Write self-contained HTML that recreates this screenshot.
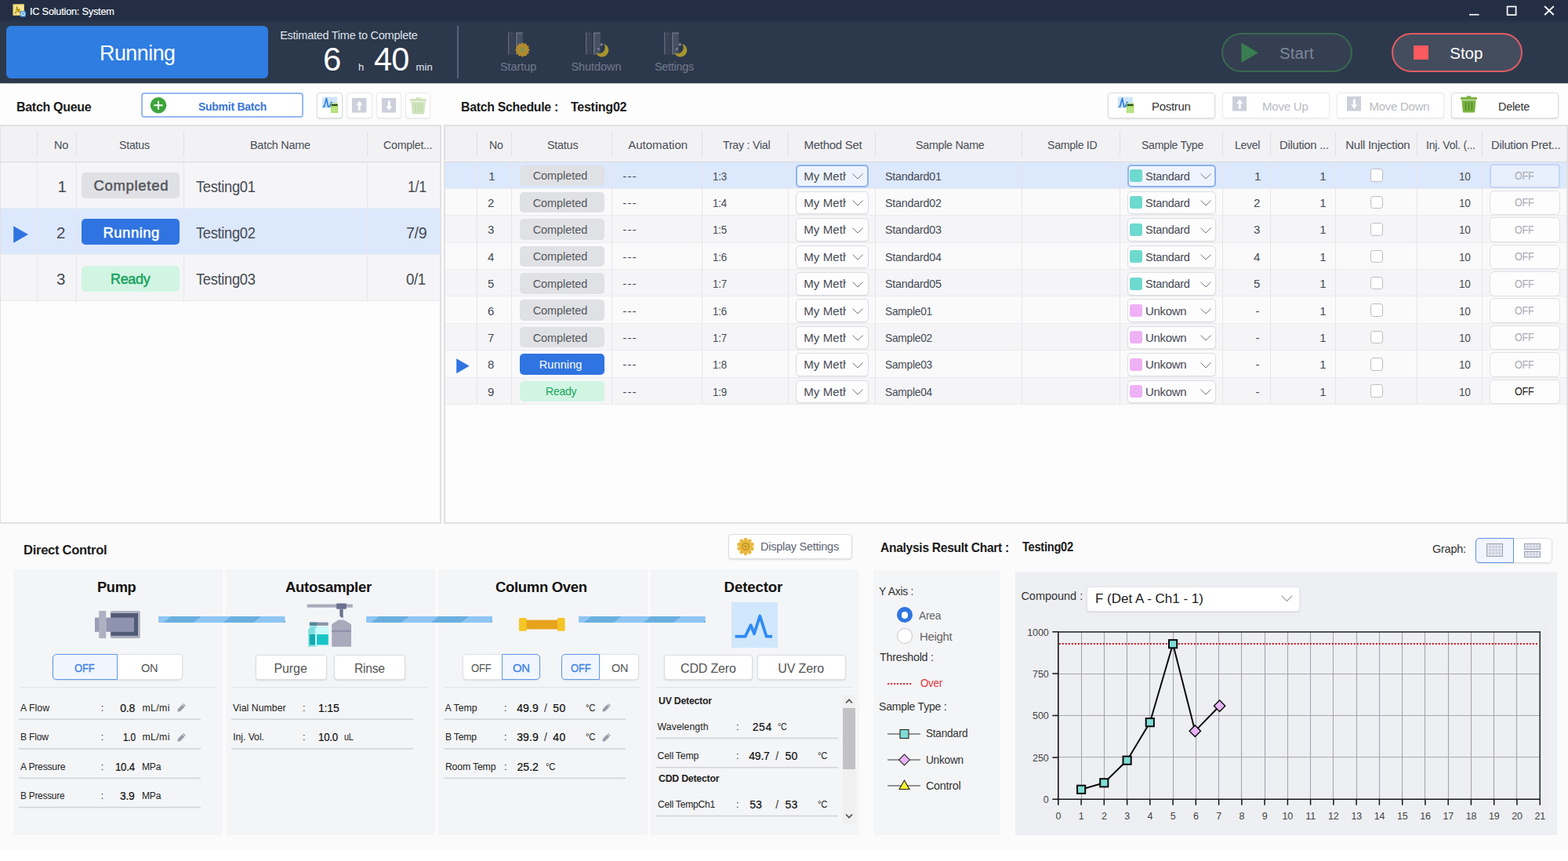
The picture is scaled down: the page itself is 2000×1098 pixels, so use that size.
<!DOCTYPE html>
<html lang="en">
<head>
<meta charset="utf-8">
<title>IC Solution: System</title>
<style>
html,body{margin:0;padding:0;}
body{width:2000px;height:1098px;overflow:hidden;background:#fff;font-family:"Liberation Sans",sans-serif;}
#app{position:relative;width:2000px;height:1098px;overflow:hidden;background:#fbfbfc;}
#app div,#app span.t,#app svg{position:absolute;box-sizing:border-box;}
span.t{white-space:nowrap;display:block;line-height:20px;}
.btn{background:#fff;border:1px solid #dcdde2;border-radius:4px;box-shadow:0 1px 2px rgba(0,0,0,.12);}

</style>
</head>
<body>
<div id="app">
<div style="left:0px;top:0px;width:2000px;height:106px;background:linear-gradient(to bottom,#232e45 0,#232e45 24px,#2c384b 30px,#2c384b 100%);"></div>
<svg style="left:16px;top:5px" width="18" height="18" viewBox="0 0 18 18">
<rect x="0.9" y="0.7" width="13.6" height="13.6" fill="#f4e497" stroke="#d9c25c" stroke-width="1"/>
<path d="M2.6 11.6 H4.2 L5.6 3.4 L7.2 10.4 L8.4 6.4 L9.6 11.6 H12.6" fill="none" stroke="#b3900f" stroke-width="1.4" stroke-linejoin="round"/>
<rect x="9.6" y="9" width="7.4" height="7.6" rx="1.6" fill="#4f9be6"/><circle cx="13.3" cy="12.8" r="2" fill="none" stroke="#e3f0fc" stroke-width="1.1"/>
</svg>
<span class="t" style="left:37.60px;top:5px;font-size:13.2px;color:#fff;letter-spacing:-0.238px;transform:scaleX(0.9674);transform-origin:0 0;-webkit-text-stroke:0.15px #fff;">IC Solution: System</span>
<svg style="left:1860px;top:0" width="140" height="27" viewBox="0 0 140 27">
<path d="M14 18.7 H26.6" stroke="#fff" stroke-width="1.6" fill="none"/>
<rect x="62.6" y="8.4" width="11" height="10.6" stroke="#fff" stroke-width="1.7" fill="none"/>
<path d="M110.2 8 L121.8 19 M121.8 8 L110.2 19" stroke="#fff" stroke-width="1.8" fill="none"/>
</svg>
<div style="left:8px;top:33px;width:334px;height:67px;background:#2f7de1;border-radius:6px;"></div>
<span class="t" style="left:126.80px;top:58px;font-size:28px;color:#fff;letter-spacing:-0.504px;transform:scaleX(0.9578);transform-origin:0 0;">Running</span>
<span class="t" style="left:357.20px;top:35px;font-size:14.5px;color:#dfe3ea;letter-spacing:-0.261px;">Estimated Time to Complete</span>
<span class="t" style="left:412.00px;top:66px;font-size:42px;color:#fff;">6</span>
<span class="t" style="left:457.00px;top:76px;font-size:13px;color:#e6e9ee;">h</span>
<span class="t" style="left:476.80px;top:66px;font-size:42px;color:#fff;letter-spacing:-0.756px;transform:scaleX(0.9876);transform-origin:0 0;">40</span>
<span class="t" style="left:530.50px;top:76px;font-size:13px;color:#e6e9ee;letter-spacing:0.175px;">min</span>
<div style="left:583px;top:33px;width:2px;height:67px;background:#55627a;"></div>
<svg style="left:646.2px;top:38px" width="36" height="38" viewBox="-2 -2.7 36 38"><rect x="0" y="0" width="8.5" height="29" fill="#394154"/><rect x="0" y="0" width="1.3" height="29" fill="#5d677b"/><circle cx="4.6" cy="2.6" r="0.7" fill="#6e778a"/><rect x="10.2" y="0.8" width="8.6" height="28" fill="#465064"/><path d="M10.8 29 V1.4 H18.8" fill="none" stroke="#6f798d" stroke-width="1.2"/><g transform="translate(18.5 22.8)" fill="#b48a2d"><rect x="-1.4" y="-8.9" width="2.8" height="4" transform="rotate(0)"/><rect x="-1.4" y="-8.9" width="2.8" height="4" transform="rotate(30)"/><rect x="-1.4" y="-8.9" width="2.8" height="4" transform="rotate(60)"/><rect x="-1.4" y="-8.9" width="2.8" height="4" transform="rotate(90)"/><rect x="-1.4" y="-8.9" width="2.8" height="4" transform="rotate(120)"/><rect x="-1.4" y="-8.9" width="2.8" height="4" transform="rotate(150)"/><rect x="-1.4" y="-8.9" width="2.8" height="4" transform="rotate(180)"/><rect x="-1.4" y="-8.9" width="2.8" height="4" transform="rotate(210)"/><rect x="-1.4" y="-8.9" width="2.8" height="4" transform="rotate(240)"/><rect x="-1.4" y="-8.9" width="2.8" height="4" transform="rotate(270)"/><rect x="-1.4" y="-8.9" width="2.8" height="4" transform="rotate(300)"/><rect x="-1.4" y="-8.9" width="2.8" height="4" transform="rotate(330)"/><circle r="7.7"/></g><circle cx="18.5" cy="22.8" r="3.6" fill="#8e9046"/></svg>
<svg style="left:745px;top:38px" width="36" height="38" viewBox="-2 -2.7 36 38"><rect x="0" y="0" width="8.5" height="29" fill="#394154"/><rect x="0" y="0" width="1.3" height="29" fill="#5d677b"/><circle cx="4.6" cy="2.6" r="0.7" fill="#6e778a"/><rect x="10.2" y="0.8" width="8.6" height="28" fill="#465064"/><path d="M10.8 29 V1.4 H18.8" fill="none" stroke="#6f798d" stroke-width="1.2"/><path d="M12.84 26.38 A8.5 8.5 0 1 0 23.12 15.22 A7.7 7.7 0 0 1 12.84 26.38 Z" fill="#a6952f"/><path d="M20.2 13 L20.9 15.3 L23.2 16 L20.9 16.7 L20.2 19 L19.5 16.7 L17.2 16 L19.5 15.3 Z" fill="#858d9e"/><path d="M16.3 19.4 L16.9 21.1 L18.6 21.7 L16.9 22.3 L16.3 24 L15.7 22.3 L14 21.7 L15.7 21.1 Z" fill="#858d9e"/></svg>
<svg style="left:845.1px;top:38px" width="36" height="38" viewBox="-2 -2.7 36 38"><rect x="0" y="0" width="8.5" height="29" fill="#394154"/><rect x="0" y="0" width="1.3" height="29" fill="#5d677b"/><circle cx="4.6" cy="2.6" r="0.7" fill="#6e778a"/><rect x="10.2" y="0.8" width="8.6" height="28" fill="#465064"/><path d="M10.8 29 V1.4 H18.8" fill="none" stroke="#6f798d" stroke-width="1.2"/><path d="M12.84 26.38 A8.5 8.5 0 1 0 23.12 15.22 A7.7 7.7 0 0 1 12.84 26.38 Z" fill="#a6952f"/><path d="M20.2 13 L20.9 15.3 L23.2 16 L20.9 16.7 L20.2 19 L19.5 16.7 L17.2 16 L19.5 15.3 Z" fill="#858d9e"/><path d="M16.3 19.4 L16.9 21.1 L18.6 21.7 L16.9 22.3 L16.3 24 L15.7 22.3 L14 21.7 L15.7 21.1 Z" fill="#858d9e"/></svg>
<span class="t" style="left:638.00px;top:75px;font-size:14.5px;color:#717b90;letter-spacing:-0.075px;">Startup</span>
<span class="t" style="left:728.40px;top:75px;font-size:14.5px;color:#717b90;letter-spacing:-0.057px;">Shutdown</span>
<span class="t" style="left:834.80px;top:75px;font-size:14.5px;color:#717b90;letter-spacing:-0.261px;transform:scaleX(0.9927);transform-origin:0 0;">Settings</span>
<div style="left:1558px;top:42px;width:167px;height:50px;border:2px solid #38694e;border-radius:25px;background:#343f51;"></div>
<svg style="left:1583px;top:54px" width="23" height="26" viewBox="0 0 23 26"><path d="M0.3 0.5 L22 13.2 L0.3 26 Z" fill="#3a7d50"/></svg>
<span class="t" style="left:1632.00px;top:58px;font-size:20.5px;color:#7d889c;letter-spacing:0.101px;">Start</span>
<div style="left:1775px;top:42px;width:167px;height:50px;border:2px solid #df5d62;border-radius:25px;background:#444d5e;"></div>
<div style="left:1803px;top:57.5px;width:19px;height:18.5px;background:#fb5a5f;"></div>
<span class="t" style="left:1849.30px;top:58px;font-size:20.5px;color:#fff;letter-spacing:-0.023px;">Stop</span>
<div style="left:0px;top:106px;width:2000px;height:54px;background:#fdfdfd;border-top:1px solid #c3c8d2;"></div>
<span class="t" style="left:21.00px;top:127px;font-size:16.8px;color:#1a1a1a;font-weight:700;letter-spacing:-0.302px;transform:scaleX(0.9523);transform-origin:0 0;">Batch Queue</span>
<div style="left:180px;top:118px;width:207px;height:32px;background:#fff;border:2px solid #96b8ee;border-radius:4px;"></div>
<svg style="left:191px;top:123px" width="22" height="22" viewBox="0 0 22 22"><circle cx="11" cy="11.2" r="10.3" fill="#3da43c"/><path d="M11 5.7 V16.7 M5.5 11.2 H16.5" stroke="#fff" stroke-width="2"/></svg>
<span class="t" style="left:252.50px;top:126px;font-size:14.5px;color:#3a76d8;font-weight:700;letter-spacing:-0.261px;transform:scaleX(0.9627);transform-origin:0 0;">Submit Batch</span>
<div class="btn" style="left:404.4px;top:118.3px;width:32.4px;height:32.4px;"></div>
<div style="left:442.2px;top:118.3px;width:32.4px;height:32.4px;background:#fff;border:1px solid #ebebef;border-radius:4px;box-shadow:0 1px 2px rgba(0,0,0,.07);"></div>
<div style="left:479.6px;top:118.3px;width:32.4px;height:32.4px;background:#fff;border:1px solid #ebebef;border-radius:4px;box-shadow:0 1px 2px rgba(0,0,0,.07);"></div>
<div style="left:517px;top:118.3px;width:32.4px;height:32.4px;background:#fff;border:1px solid #ebebef;border-radius:4px;box-shadow:0 1px 2px rgba(0,0,0,.07);"></div>
<svg style="left:410px;top:123px" width="22" height="22" viewBox="0 0 22 22">
<rect x="0.8" y="0.6" width="19.2" height="14.4" fill="#cfe5fb"/>
<path d="M1.6 13 H3.6 L6.4 2.4 L8.6 13 H10.4 L12.6 7.4 L14 9.8" fill="none" stroke="#2f7de1" stroke-width="1.7" stroke-linejoin="round"/>
<rect x="12" y="8.6" width="9.2" height="12.4" fill="#a3da5c"/><rect x="12" y="8.6" width="9.2" height="1.2" fill="#cfeaa6"/><rect x="12.6" y="9.8" width="8" height="2.2" fill="#2c4a1e"/>
<path d="M14.3 13 V21 M16.6 13 V21 M18.9 13 V21 M12 15.4 H21.2 M12 18.2 H21.2" stroke="#d5f0b0" stroke-width="0.7"/>
</svg>
<svg style="left:449.2px;top:125px" width="18.4" height="18.6" viewBox="0 0 18.4 18.6"><rect width="18.4" height="18.6" fill="#cdd0db"/><path d="M9.3 3.6 L13.2 9 H10.7 V15.8 H7.9 V9 H5.4 Z" fill="#fff"/></svg>
<svg style="left:486.6px;top:125px" width="18.4" height="18.6" viewBox="0 0 18.4 18.6"><rect width="18.4" height="18.6" fill="#cdd0db"/><path d="M9.3 16 L13.2 10.6 H10.7 V3.6 H7.9 V10.6 H5.4 Z" fill="#fff"/></svg>
<svg style="left:522.8px;top:123.6px;opacity:1" width="21" height="22" viewBox="0 0 21 22">
<path d="M7.6 0.3 H13.4 V2.2 H7.6 Z" fill="#cfe3bd"/><rect x="0" y="2" width="21" height="3.2" rx="1" fill="#cfe3bd"/>
<path d="M1.4 6 H19.6 L18.2 20.4 Q18.1 21.4 17.2 21.4 H3.8 Q2.9 21.4 2.8 20.4 Z" fill="#cfe3bd"/>
<path d="M6.6 8.6 V19 M10.5 8.6 V19 M14.4 8.6 V19" stroke="#c0d9ab" stroke-width="1.4"/>
</svg>
<span class="t" style="left:587.90px;top:127px;font-size:16.6px;color:#1a1a1a;font-weight:700;letter-spacing:-0.299px;transform:scaleX(0.9547);transform-origin:0 0;">Batch Schedule :</span>
<span class="t" style="left:727.60px;top:127px;font-size:16.6px;color:#1a1a1a;font-weight:700;letter-spacing:-0.299px;transform:scaleX(0.9679);transform-origin:0 0;">Testing02</span>
<div class="btn" style="left:1413px;top:118.3px;width:136.5px;height:32.4px;"></div>
<div style="left:1559px;top:118.3px;width:136.5px;height:32.4px;background:#fff;border:1px solid #ebebef;border-radius:4px;box-shadow:0 1px 2px rgba(0,0,0,.07);"></div>
<div style="left:1705px;top:118.3px;width:136.5px;height:32.4px;background:#fff;border:1px solid #ebebef;border-radius:4px;box-shadow:0 1px 2px rgba(0,0,0,.07);"></div>
<div class="btn" style="left:1851px;top:118.3px;width:136.5px;height:32.4px;"></div>
<span class="t" style="left:1468.70px;top:126px;font-size:15px;color:#333;letter-spacing:-0.270px;transform:scaleX(0.9945);transform-origin:0 0;">Postrun</span>
<span class="t" style="left:1610.10px;top:126px;font-size:15px;color:#b9bbc2;letter-spacing:-0.220px;">Move Up</span>
<span class="t" style="left:1746.50px;top:126px;font-size:15px;color:#b9bbc2;letter-spacing:-0.270px;">Move Down</span>
<span class="t" style="left:1910.70px;top:126px;font-size:15px;color:#333;letter-spacing:-0.270px;transform:scaleX(0.9594);transform-origin:0 0;">Delete</span>
<svg style="left:1425px;top:123px" width="22" height="22" viewBox="0 0 22 22">
<rect x="0.8" y="0.6" width="19.2" height="14.4" fill="#cfe5fb"/>
<path d="M1.6 13 H3.6 L6.4 2.4 L8.6 13 H10.4 L12.6 7.4 L14 9.8" fill="none" stroke="#2f7de1" stroke-width="1.7" stroke-linejoin="round"/>
<rect x="12" y="8.6" width="9.2" height="12.4" fill="#a3da5c"/><rect x="12" y="8.6" width="9.2" height="1.2" fill="#cfeaa6"/><rect x="12.6" y="9.8" width="8" height="2.2" fill="#2c4a1e"/>
<path d="M14.3 13 V21 M16.6 13 V21 M18.9 13 V21 M12 15.4 H21.2 M12 18.2 H21.2" stroke="#d5f0b0" stroke-width="0.7"/>
</svg>
<svg style="left:1571.7px;top:123.4px" width="18.4" height="18.6" viewBox="0 0 18.4 18.6"><rect width="18.4" height="18.6" fill="#cdd0db"/><path d="M9.3 3.6 L13.2 9 H10.7 V15.8 H7.9 V9 H5.4 Z" fill="#fff"/></svg>
<svg style="left:1717.8px;top:123.4px" width="18.4" height="18.6" viewBox="0 0 18.4 18.6"><rect width="18.4" height="18.6" fill="#cdd0db"/><path d="M9.3 16 L13.2 10.6 H10.7 V3.6 H7.9 V10.6 H5.4 Z" fill="#fff"/></svg>
<svg style="left:1863px;top:122px;opacity:1" width="21" height="22" viewBox="0 0 21 22">
<path d="M7.6 0.3 H13.4 V2.2 H7.6 Z" fill="#7cb342"/><rect x="0" y="2" width="21" height="3.2" rx="1" fill="#7cb342"/>
<path d="M1.4 6 H19.6 L18.2 20.4 Q18.1 21.4 17.2 21.4 H3.8 Q2.9 21.4 2.8 20.4 Z" fill="#7cb342"/>
<path d="M6.6 8.6 V19 M10.5 8.6 V19 M14.4 8.6 V19" stroke="#4c8a2a" stroke-width="1.4"/>
</svg>
<div style="left:-1px;top:159px;width:564px;height:509px;background:#fcfcfd;border:2px solid #e1e1e4;"></div>
<div style="left:1px;top:161px;width:560px;height:45.5px;background:#f2f2f4;border-bottom:1.5px solid #dadade;"></div>
<div style="left:1px;top:206.5px;width:560px;height:59.3px;background:#f5f5f7;border-bottom:1px solid #ececf0;"></div>
<div style="left:1px;top:265.8px;width:560px;height:59.3px;background:#dce8fc;border-bottom:1px solid #ececf0;"></div>
<div style="left:1px;top:325.1px;width:560px;height:59.3px;background:#f5f5f7;border-bottom:1px solid #ececf0;"></div>
<div style="left:47px;top:168px;width:1px;height:31px;background:#e0e0e4;"></div>
<div style="left:47px;top:207px;width:1px;height:177.89999999999998px;background:#e6e6ea;"></div>
<div style="left:97px;top:168px;width:1px;height:31px;background:#e0e0e4;"></div>
<div style="left:97px;top:207px;width:1px;height:177.89999999999998px;background:#e6e6ea;"></div>
<div style="left:234px;top:168px;width:1px;height:31px;background:#e0e0e4;"></div>
<div style="left:234px;top:207px;width:1px;height:177.89999999999998px;background:#e6e6ea;"></div>
<div style="left:468px;top:168px;width:1px;height:31px;background:#e0e0e4;"></div>
<div style="left:468px;top:207px;width:1px;height:177.89999999999998px;background:#e6e6ea;"></div>
<span class="t" style="left:69.40px;top:175px;font-size:15px;color:#4a4d57;letter-spacing:-0.270px;transform:scaleX(0.9626);transform-origin:0 0;">No</span>
<span class="t" style="left:152.40px;top:175px;font-size:15px;color:#4a4d57;letter-spacing:-0.270px;transform:scaleX(0.9472);transform-origin:0 0;">Status</span>
<span class="t" style="left:318.90px;top:175px;font-size:15px;color:#4a4d57;letter-spacing:-0.270px;transform:scaleX(0.9625);transform-origin:0 0;">Batch Name</span>
<span class="t" style="left:489.00px;top:175px;font-size:15px;color:#4a4d57;letter-spacing:-0.270px;transform:scaleX(0.9465);transform-origin:0 0;">Complet...</span>
<span class="t" style="left:73.40px;top:228px;font-size:20.5px;color:#464a54;">1</span>
<div style="left:104.4px;top:219.9px;width:124.8px;height:33px;background:#e0e1e5;border-radius:5px;"></div>
<span class="t" style="left:119.40px;top:227px;font-size:18.5px;color:#55575c;letter-spacing:0.704px;-webkit-text-stroke:0.5px currentColor;">Completed</span>
<span class="t" style="left:249.60px;top:228px;font-size:20px;color:#464a54;letter-spacing:-0.360px;transform:scaleX(0.9173);transform-origin:0 0;">Testing01</span>
<span class="t" style="left:519.60px;top:228px;font-size:20px;color:#464a54;letter-spacing:-0.360px;transform:scaleX(0.8863);transform-origin:0 0;">1/1</span>
<span class="t" style="left:72.10px;top:287px;font-size:20.5px;color:#464a54;">2</span>
<div style="left:104.4px;top:279.2px;width:124.8px;height:33px;background:#2f74e0;border-radius:5px;"></div>
<span class="t" style="left:131.50px;top:287px;font-size:18.5px;color:#fff;letter-spacing:0.481px;-webkit-text-stroke:0.5px currentColor;">Running</span>
<span class="t" style="left:249.60px;top:287px;font-size:20px;color:#464a54;letter-spacing:-0.360px;transform:scaleX(0.9173);transform-origin:0 0;">Testing02</span>
<span class="t" style="left:518.40px;top:287px;font-size:20px;color:#464a54;letter-spacing:-0.360px;transform:scaleX(0.9860);transform-origin:0 0;">7/9</span>
<span class="t" style="left:72.10px;top:346px;font-size:20.5px;color:#464a54;">3</span>
<div style="left:104.4px;top:338.5px;width:124.8px;height:33px;background:#d2f5e3;border-radius:5px;"></div>
<span class="t" style="left:141.00px;top:346px;font-size:18.5px;color:#17a35c;letter-spacing:-0.333px;transform:scaleX(0.9723);transform-origin:0 0;-webkit-text-stroke:0.5px currentColor;">Ready</span>
<span class="t" style="left:249.60px;top:346px;font-size:20px;color:#464a54;letter-spacing:-0.360px;transform:scaleX(0.9173);transform-origin:0 0;">Testing03</span>
<span class="t" style="left:518.40px;top:346px;font-size:20px;color:#464a54;letter-spacing:-0.360px;transform:scaleX(0.9306);transform-origin:0 0;">0/1</span>
<svg style="left:17px;top:287.5px" width="20" height="22" viewBox="0 0 20 22"><path d="M0.2 0.3 L19 11 L0.2 21.7 Z" fill="#2f74e0"/></svg>
<div style="left:566px;top:159px;width:1434px;height:509px;background:#fcfcfd;border:2px solid #e1e1e4;"></div>
<div style="left:568px;top:161px;width:1430px;height:45.5px;background:#f2f2f4;border-bottom:1.5px solid #dadade;"></div>
<div style="left:568px;top:206.5px;width:1430px;height:34.375px;background:#dce8fc;border-bottom:1px solid #ececf0;"></div>
<div style="left:568px;top:240.875px;width:1430px;height:34.375px;background:#fafafb;border-bottom:1px solid #ececf0;"></div>
<div style="left:568px;top:275.25px;width:1430px;height:34.375px;background:#f5f5f7;border-bottom:1px solid #ececf0;"></div>
<div style="left:568px;top:309.625px;width:1430px;height:34.375px;background:#fafafb;border-bottom:1px solid #ececf0;"></div>
<div style="left:568px;top:344.0px;width:1430px;height:34.375px;background:#f5f5f7;border-bottom:1px solid #ececf0;"></div>
<div style="left:568px;top:378.375px;width:1430px;height:34.375px;background:#fafafb;border-bottom:1px solid #ececf0;"></div>
<div style="left:568px;top:412.75px;width:1430px;height:34.375px;background:#f5f5f7;border-bottom:1px solid #ececf0;"></div>
<div style="left:568px;top:447.125px;width:1430px;height:34.375px;background:#fafafb;border-bottom:1px solid #ececf0;"></div>
<div style="left:568px;top:481.5px;width:1430px;height:34.375px;background:#f5f5f7;border-bottom:1px solid #ececf0;"></div>
<div style="left:608px;top:168px;width:1px;height:31px;background:#e0e0e4;"></div>
<div style="left:608px;top:207px;width:1px;height:309.375px;background:#e6e6ea;"></div>
<div style="left:652px;top:168px;width:1px;height:31px;background:#e0e0e4;"></div>
<div style="left:652px;top:207px;width:1px;height:309.375px;background:#e6e6ea;"></div>
<div style="left:780px;top:168px;width:1px;height:31px;background:#e0e0e4;"></div>
<div style="left:780px;top:207px;width:1px;height:309.375px;background:#e6e6ea;"></div>
<div style="left:895px;top:168px;width:1px;height:31px;background:#e0e0e4;"></div>
<div style="left:895px;top:207px;width:1px;height:309.375px;background:#e6e6ea;"></div>
<div style="left:1005px;top:168px;width:1px;height:31px;background:#e0e0e4;"></div>
<div style="left:1005px;top:207px;width:1px;height:309.375px;background:#e6e6ea;"></div>
<div style="left:1116px;top:168px;width:1px;height:31px;background:#e0e0e4;"></div>
<div style="left:1116px;top:207px;width:1px;height:309.375px;background:#e6e6ea;"></div>
<div style="left:1303px;top:168px;width:1px;height:31px;background:#e0e0e4;"></div>
<div style="left:1303px;top:207px;width:1px;height:309.375px;background:#e6e6ea;"></div>
<div style="left:1428px;top:168px;width:1px;height:31px;background:#e0e0e4;"></div>
<div style="left:1428px;top:207px;width:1px;height:309.375px;background:#e6e6ea;"></div>
<div style="left:1559px;top:168px;width:1px;height:31px;background:#e0e0e4;"></div>
<div style="left:1559px;top:207px;width:1px;height:309.375px;background:#e6e6ea;"></div>
<div style="left:1620px;top:168px;width:1px;height:31px;background:#e0e0e4;"></div>
<div style="left:1620px;top:207px;width:1px;height:309.375px;background:#e6e6ea;"></div>
<div style="left:1703px;top:168px;width:1px;height:31px;background:#e0e0e4;"></div>
<div style="left:1703px;top:207px;width:1px;height:309.375px;background:#e6e6ea;"></div>
<div style="left:1807px;top:168px;width:1px;height:31px;background:#e0e0e4;"></div>
<div style="left:1807px;top:207px;width:1px;height:309.375px;background:#e6e6ea;"></div>
<div style="left:1890px;top:168px;width:1px;height:31px;background:#e0e0e4;"></div>
<div style="left:1890px;top:207px;width:1px;height:309.375px;background:#e6e6ea;"></div>
<span class="t" style="left:623.60px;top:175px;font-size:15px;color:#4a4d57;letter-spacing:-0.270px;transform:scaleX(0.9414);transform-origin:0 0;">No</span>
<span class="t" style="left:698.00px;top:175px;font-size:15px;color:#4a4d57;letter-spacing:-0.270px;transform:scaleX(0.9617);transform-origin:0 0;">Status</span>
<span class="t" style="left:801.20px;top:175px;font-size:15px;color:#4a4d57;">Automation</span>
<span class="t" style="left:921.90px;top:175px;font-size:15px;color:#4a4d57;letter-spacing:-0.270px;transform:scaleX(0.9470);transform-origin:0 0;">Tray : Vial</span>
<span class="t" style="left:1025.50px;top:175px;font-size:15px;color:#4a4d57;letter-spacing:-0.270px;">Method Set</span>
<span class="t" style="left:1167.90px;top:175px;font-size:15px;color:#4a4d57;letter-spacing:-0.270px;transform:scaleX(0.9498);transform-origin:0 0;">Sample Name</span>
<span class="t" style="left:1335.80px;top:175px;font-size:15px;color:#4a4d57;letter-spacing:-0.270px;transform:scaleX(0.9386);transform-origin:0 0;">Sample ID</span>
<span class="t" style="left:1456.40px;top:175px;font-size:15px;color:#4a4d57;letter-spacing:-0.270px;transform:scaleX(0.9364);transform-origin:0 0;">Sample Type</span>
<span class="t" style="left:1575.20px;top:175px;font-size:15px;color:#4a4d57;letter-spacing:-0.270px;transform:scaleX(0.9316);transform-origin:0 0;">Level</span>
<span class="t" style="left:1631.70px;top:175px;font-size:15px;color:#4a4d57;letter-spacing:-0.270px;transform:scaleX(0.9886);transform-origin:0 0;">Dilution ...</span>
<span class="t" style="left:1716.30px;top:175px;font-size:15px;color:#4a4d57;letter-spacing:-0.270px;">Null Injection</span>
<span class="t" style="left:1818.90px;top:175px;font-size:15px;color:#4a4d57;letter-spacing:-0.270px;transform:scaleX(0.9354);transform-origin:0 0;">Inj. Vol. (...</span>
<span class="t" style="left:1901.70px;top:175px;font-size:15px;color:#4a4d57;letter-spacing:-0.270px;transform:scaleX(0.9827);transform-origin:0 0;">Dilution Pret...</span>
<span class="t" style="left:623.25px;top:215px;font-size:15px;color:#464a54;">1</span>
<div style="left:663px;top:210.5px;width:107.6px;height:26.5px;background:#e0e1e5;border-radius:5px;"></div>
<span class="t" style="left:679.70px;top:214px;font-size:14.5px;color:#55575c;letter-spacing:-0.065px;">Completed</span>
<span class="t" style="left:794.20px;top:215px;font-size:15px;color:#464a54;letter-spacing:1.207px;">---</span>
<span class="t" style="left:908.90px;top:215px;font-size:15px;color:#464a54;letter-spacing:-0.270px;transform:scaleX(0.8912);transform-origin:0 0;">1:3</span>
<div style="left:1015.2px;top:209.5px;width:92.6px;height:29.6px;background:#eef4fe;border:2px solid #8fb2ea;border-radius:5px;"></div>
<div style="left:1024px;top:215px;width:54.6px;height:21px;overflow:hidden;"><span class="t" style="left:1.2px;top:0;font-size:15px;color:#464a54;letter-spacing:0.12px;">My Method</span></div>
<svg style="left:1087.4px;top:221.1px" width="14" height="8" viewBox="0 0 14 8"><path d="M0.5 0.6 L7 7 L13.5 0.6" fill="none" stroke="#707480" stroke-width="1"/></svg>
<span class="t" style="left:1129.30px;top:215px;font-size:15px;color:#464a54;letter-spacing:-0.270px;transform:scaleX(0.9569);transform-origin:0 0;">Standard01</span>
<div style="left:1437.7px;top:209.5px;width:113.5px;height:29.6px;background:#eef4fe;border:2px solid #8fb2ea;border-radius:5px;"></div>
<div style="left:1440.7px;top:216.0px;width:16.2px;height:16px;background:#6dd9cf;border-radius:3px;"></div>
<span class="t" style="left:1460.70px;top:215px;font-size:15px;color:#464a54;letter-spacing:-0.270px;transform:scaleX(0.9646);transform-origin:0 0;">Standard</span>
<svg style="left:1530.9px;top:221.1px" width="14" height="8" viewBox="0 0 14 8"><path d="M0.5 0.6 L7 7 L13.5 0.6" fill="none" stroke="#707480" stroke-width="1"/></svg>
<span class="t" style="left:1600.05px;top:215px;font-size:15px;color:#464a54;">1</span>
<span class="t" style="left:1683.25px;top:215px;font-size:15px;color:#464a54;">1</span>
<div style="left:1747.8px;top:215.39999999999998px;width:16.4px;height:16.6px;background:#fff;border:1px solid #bcbcc1;border-radius:3.5px;"></div>
<span class="t" style="left:1861.40px;top:215px;font-size:15px;color:#464a54;letter-spacing:-0.270px;transform:scaleX(0.9015);transform-origin:0 0;">10</span>
<div style="left:1899.5px;top:208.5px;width:90.2px;height:31.6px;background:#e8effd;border:2px solid #c5d5f3;border-radius:4px;"></div>
<span class="t" style="left:1931.70px;top:214px;font-size:14px;color:#a9abb3;letter-spacing:-0.252px;transform:scaleX(0.8949);transform-origin:0 0;">OFF</span>
<span class="t" style="left:622.10px;top:249px;font-size:15px;color:#464a54;">2</span>
<div style="left:663px;top:244.875px;width:107.6px;height:26.5px;background:#e0e1e5;border-radius:5px;"></div>
<span class="t" style="left:679.70px;top:249px;font-size:14.5px;color:#55575c;letter-spacing:-0.065px;">Completed</span>
<span class="t" style="left:794.20px;top:249px;font-size:15px;color:#464a54;letter-spacing:1.207px;">---</span>
<span class="t" style="left:908.90px;top:249px;font-size:15px;color:#464a54;letter-spacing:-0.270px;transform:scaleX(0.8912);transform-origin:0 0;">1:4</span>
<div style="left:1015.2px;top:243.875px;width:92.6px;height:29.6px;background:#fdfdfe;border:1px solid #dcdde2;border-radius:5px;box-shadow:0 1px 1px rgba(0,0,0,.06);"></div>
<div style="left:1024px;top:249px;width:54.6px;height:21px;overflow:hidden;"><span class="t" style="left:1.2px;top:0;font-size:15px;color:#464a54;letter-spacing:0.12px;">My Method</span></div>
<svg style="left:1087.4px;top:255.475px" width="14" height="8" viewBox="0 0 14 8"><path d="M0.5 0.6 L7 7 L13.5 0.6" fill="none" stroke="#707480" stroke-width="1"/></svg>
<span class="t" style="left:1129.30px;top:249px;font-size:15px;color:#464a54;letter-spacing:-0.270px;transform:scaleX(0.9569);transform-origin:0 0;">Standard02</span>
<div style="left:1437.7px;top:243.875px;width:113.5px;height:29.6px;background:#fdfdfe;border:1px solid #dcdde2;border-radius:5px;box-shadow:0 1px 1px rgba(0,0,0,.06);"></div>
<div style="left:1440.7px;top:250.375px;width:16.2px;height:16px;background:#6dd9cf;border-radius:3px;"></div>
<span class="t" style="left:1460.70px;top:249px;font-size:15px;color:#464a54;letter-spacing:-0.270px;transform:scaleX(0.9646);transform-origin:0 0;">Standard</span>
<svg style="left:1530.9px;top:255.475px" width="14" height="8" viewBox="0 0 14 8"><path d="M0.5 0.6 L7 7 L13.5 0.6" fill="none" stroke="#707480" stroke-width="1"/></svg>
<span class="t" style="left:1598.90px;top:249px;font-size:15px;color:#464a54;">2</span>
<span class="t" style="left:1683.25px;top:249px;font-size:15px;color:#464a54;">1</span>
<div style="left:1747.8px;top:249.77499999999998px;width:16.4px;height:16.6px;background:#fff;border:1px solid #bcbcc1;border-radius:3.5px;"></div>
<span class="t" style="left:1861.40px;top:249px;font-size:15px;color:#464a54;letter-spacing:-0.270px;transform:scaleX(0.9015);transform-origin:0 0;">10</span>
<div style="left:1899.5px;top:242.875px;width:90.2px;height:31.6px;background:#fdfdfe;border:1px solid #e0e0e4;border-radius:6px;"></div>
<span class="t" style="left:1931.70px;top:248px;font-size:14px;color:#a9abb3;letter-spacing:-0.252px;transform:scaleX(0.8949);transform-origin:0 0;">OFF</span>
<span class="t" style="left:622.10px;top:283px;font-size:15px;color:#464a54;">3</span>
<div style="left:663px;top:279.25px;width:107.6px;height:26.5px;background:#e0e1e5;border-radius:5px;"></div>
<span class="t" style="left:679.70px;top:283px;font-size:14.5px;color:#55575c;letter-spacing:-0.065px;">Completed</span>
<span class="t" style="left:794.20px;top:283px;font-size:15px;color:#464a54;letter-spacing:1.207px;">---</span>
<span class="t" style="left:908.90px;top:283px;font-size:15px;color:#464a54;letter-spacing:-0.270px;transform:scaleX(0.8912);transform-origin:0 0;">1:5</span>
<div style="left:1015.2px;top:278.25px;width:92.6px;height:29.6px;background:#fdfdfe;border:1px solid #dcdde2;border-radius:5px;box-shadow:0 1px 1px rgba(0,0,0,.06);"></div>
<div style="left:1024px;top:283px;width:54.6px;height:21px;overflow:hidden;"><span class="t" style="left:1.2px;top:0;font-size:15px;color:#464a54;letter-spacing:0.12px;">My Method</span></div>
<svg style="left:1087.4px;top:289.84999999999997px" width="14" height="8" viewBox="0 0 14 8"><path d="M0.5 0.6 L7 7 L13.5 0.6" fill="none" stroke="#707480" stroke-width="1"/></svg>
<span class="t" style="left:1129.30px;top:283px;font-size:15px;color:#464a54;letter-spacing:-0.270px;transform:scaleX(0.9569);transform-origin:0 0;">Standard03</span>
<div style="left:1437.7px;top:278.25px;width:113.5px;height:29.6px;background:#fdfdfe;border:1px solid #dcdde2;border-radius:5px;box-shadow:0 1px 1px rgba(0,0,0,.06);"></div>
<div style="left:1440.7px;top:284.75px;width:16.2px;height:16px;background:#6dd9cf;border-radius:3px;"></div>
<span class="t" style="left:1460.70px;top:283px;font-size:15px;color:#464a54;letter-spacing:-0.270px;transform:scaleX(0.9646);transform-origin:0 0;">Standard</span>
<svg style="left:1530.9px;top:289.84999999999997px" width="14" height="8" viewBox="0 0 14 8"><path d="M0.5 0.6 L7 7 L13.5 0.6" fill="none" stroke="#707480" stroke-width="1"/></svg>
<span class="t" style="left:1598.90px;top:283px;font-size:15px;color:#464a54;">3</span>
<span class="t" style="left:1683.25px;top:283px;font-size:15px;color:#464a54;">1</span>
<div style="left:1747.8px;top:284.15px;width:16.4px;height:16.6px;background:#fff;border:1px solid #bcbcc1;border-radius:3.5px;"></div>
<span class="t" style="left:1861.40px;top:283px;font-size:15px;color:#464a54;letter-spacing:-0.270px;transform:scaleX(0.9015);transform-origin:0 0;">10</span>
<div style="left:1899.5px;top:277.25px;width:90.2px;height:31.6px;background:#fdfdfe;border:1px solid #e0e0e4;border-radius:6px;"></div>
<span class="t" style="left:1931.70px;top:283px;font-size:14px;color:#a9abb3;letter-spacing:-0.252px;transform:scaleX(0.8949);transform-origin:0 0;">OFF</span>
<span class="t" style="left:622.10px;top:318px;font-size:15px;color:#464a54;">4</span>
<div style="left:663px;top:313.625px;width:107.6px;height:26.5px;background:#e0e1e5;border-radius:5px;"></div>
<span class="t" style="left:679.70px;top:317px;font-size:14.5px;color:#55575c;letter-spacing:-0.065px;">Completed</span>
<span class="t" style="left:794.20px;top:318px;font-size:15px;color:#464a54;letter-spacing:1.207px;">---</span>
<span class="t" style="left:908.90px;top:318px;font-size:15px;color:#464a54;letter-spacing:-0.270px;transform:scaleX(0.8912);transform-origin:0 0;">1:6</span>
<div style="left:1015.2px;top:312.625px;width:92.6px;height:29.6px;background:#fdfdfe;border:1px solid #dcdde2;border-radius:5px;box-shadow:0 1px 1px rgba(0,0,0,.06);"></div>
<div style="left:1024px;top:318px;width:54.6px;height:21px;overflow:hidden;"><span class="t" style="left:1.2px;top:0;font-size:15px;color:#464a54;letter-spacing:0.12px;">My Method</span></div>
<svg style="left:1087.4px;top:324.22499999999997px" width="14" height="8" viewBox="0 0 14 8"><path d="M0.5 0.6 L7 7 L13.5 0.6" fill="none" stroke="#707480" stroke-width="1"/></svg>
<span class="t" style="left:1129.30px;top:318px;font-size:15px;color:#464a54;letter-spacing:-0.270px;transform:scaleX(0.9569);transform-origin:0 0;">Standard04</span>
<div style="left:1437.7px;top:312.625px;width:113.5px;height:29.6px;background:#fdfdfe;border:1px solid #dcdde2;border-radius:5px;box-shadow:0 1px 1px rgba(0,0,0,.06);"></div>
<div style="left:1440.7px;top:319.125px;width:16.2px;height:16px;background:#6dd9cf;border-radius:3px;"></div>
<span class="t" style="left:1460.70px;top:318px;font-size:15px;color:#464a54;letter-spacing:-0.270px;transform:scaleX(0.9646);transform-origin:0 0;">Standard</span>
<svg style="left:1530.9px;top:324.22499999999997px" width="14" height="8" viewBox="0 0 14 8"><path d="M0.5 0.6 L7 7 L13.5 0.6" fill="none" stroke="#707480" stroke-width="1"/></svg>
<span class="t" style="left:1598.90px;top:318px;font-size:15px;color:#464a54;">4</span>
<span class="t" style="left:1683.25px;top:318px;font-size:15px;color:#464a54;">1</span>
<div style="left:1747.8px;top:318.525px;width:16.4px;height:16.6px;background:#fff;border:1px solid #bcbcc1;border-radius:3.5px;"></div>
<span class="t" style="left:1861.40px;top:318px;font-size:15px;color:#464a54;letter-spacing:-0.270px;transform:scaleX(0.9015);transform-origin:0 0;">10</span>
<div style="left:1899.5px;top:311.625px;width:90.2px;height:31.6px;background:#fdfdfe;border:1px solid #e0e0e4;border-radius:6px;"></div>
<span class="t" style="left:1931.70px;top:317px;font-size:14px;color:#a9abb3;letter-spacing:-0.252px;transform:scaleX(0.8949);transform-origin:0 0;">OFF</span>
<span class="t" style="left:622.10px;top:352px;font-size:15px;color:#464a54;">5</span>
<div style="left:663px;top:348.0px;width:107.6px;height:26.5px;background:#e0e1e5;border-radius:5px;"></div>
<span class="t" style="left:679.70px;top:352px;font-size:14.5px;color:#55575c;letter-spacing:-0.065px;">Completed</span>
<span class="t" style="left:794.20px;top:352px;font-size:15px;color:#464a54;letter-spacing:1.207px;">---</span>
<span class="t" style="left:908.90px;top:352px;font-size:15px;color:#464a54;letter-spacing:-0.270px;transform:scaleX(0.8912);transform-origin:0 0;">1:7</span>
<div style="left:1015.2px;top:347.0px;width:92.6px;height:29.6px;background:#fdfdfe;border:1px solid #dcdde2;border-radius:5px;box-shadow:0 1px 1px rgba(0,0,0,.06);"></div>
<div style="left:1024px;top:352px;width:54.6px;height:21px;overflow:hidden;"><span class="t" style="left:1.2px;top:0;font-size:15px;color:#464a54;letter-spacing:0.12px;">My Method</span></div>
<svg style="left:1087.4px;top:358.59999999999997px" width="14" height="8" viewBox="0 0 14 8"><path d="M0.5 0.6 L7 7 L13.5 0.6" fill="none" stroke="#707480" stroke-width="1"/></svg>
<span class="t" style="left:1129.30px;top:352px;font-size:15px;color:#464a54;letter-spacing:-0.270px;transform:scaleX(0.9569);transform-origin:0 0;">Standard05</span>
<div style="left:1437.7px;top:347.0px;width:113.5px;height:29.6px;background:#fdfdfe;border:1px solid #dcdde2;border-radius:5px;box-shadow:0 1px 1px rgba(0,0,0,.06);"></div>
<div style="left:1440.7px;top:353.5px;width:16.2px;height:16px;background:#6dd9cf;border-radius:3px;"></div>
<span class="t" style="left:1460.70px;top:352px;font-size:15px;color:#464a54;letter-spacing:-0.270px;transform:scaleX(0.9646);transform-origin:0 0;">Standard</span>
<svg style="left:1530.9px;top:358.59999999999997px" width="14" height="8" viewBox="0 0 14 8"><path d="M0.5 0.6 L7 7 L13.5 0.6" fill="none" stroke="#707480" stroke-width="1"/></svg>
<span class="t" style="left:1598.90px;top:352px;font-size:15px;color:#464a54;">5</span>
<span class="t" style="left:1683.25px;top:352px;font-size:15px;color:#464a54;">1</span>
<div style="left:1747.8px;top:352.9px;width:16.4px;height:16.6px;background:#fff;border:1px solid #bcbcc1;border-radius:3.5px;"></div>
<span class="t" style="left:1861.40px;top:352px;font-size:15px;color:#464a54;letter-spacing:-0.270px;transform:scaleX(0.9015);transform-origin:0 0;">10</span>
<div style="left:1899.5px;top:346.0px;width:90.2px;height:31.6px;background:#fdfdfe;border:1px solid #e0e0e4;border-radius:6px;"></div>
<span class="t" style="left:1931.70px;top:352px;font-size:14px;color:#a9abb3;letter-spacing:-0.252px;transform:scaleX(0.8949);transform-origin:0 0;">OFF</span>
<span class="t" style="left:622.10px;top:387px;font-size:15px;color:#464a54;">6</span>
<div style="left:663px;top:382.375px;width:107.6px;height:26.5px;background:#e0e1e5;border-radius:5px;"></div>
<span class="t" style="left:679.70px;top:386px;font-size:14.5px;color:#55575c;letter-spacing:-0.065px;">Completed</span>
<span class="t" style="left:794.20px;top:387px;font-size:15px;color:#464a54;letter-spacing:1.207px;">---</span>
<span class="t" style="left:908.90px;top:387px;font-size:15px;color:#464a54;letter-spacing:-0.270px;transform:scaleX(0.8912);transform-origin:0 0;">1:6</span>
<div style="left:1015.2px;top:381.375px;width:92.6px;height:29.6px;background:#fdfdfe;border:1px solid #dcdde2;border-radius:5px;box-shadow:0 1px 1px rgba(0,0,0,.06);"></div>
<div style="left:1024px;top:387px;width:54.6px;height:21px;overflow:hidden;"><span class="t" style="left:1.2px;top:0;font-size:15px;color:#464a54;letter-spacing:0.12px;">My Method</span></div>
<svg style="left:1087.4px;top:392.97499999999997px" width="14" height="8" viewBox="0 0 14 8"><path d="M0.5 0.6 L7 7 L13.5 0.6" fill="none" stroke="#707480" stroke-width="1"/></svg>
<span class="t" style="left:1129.30px;top:387px;font-size:15px;color:#464a54;letter-spacing:-0.270px;transform:scaleX(0.9169);transform-origin:0 0;">Sample01</span>
<div style="left:1437.7px;top:381.375px;width:113.5px;height:29.6px;background:#fdfdfe;border:1px solid #dcdde2;border-radius:5px;box-shadow:0 1px 1px rgba(0,0,0,.06);"></div>
<div style="left:1440.7px;top:387.875px;width:16.2px;height:16px;background:#efb1f5;border-radius:3px;"></div>
<span class="t" style="left:1460.70px;top:387px;font-size:15px;color:#464a54;letter-spacing:-0.270px;transform:scaleX(0.9954);transform-origin:0 0;">Unkown</span>
<svg style="left:1530.9px;top:392.97499999999997px" width="14" height="8" viewBox="0 0 14 8"><path d="M0.5 0.6 L7 7 L13.5 0.6" fill="none" stroke="#707480" stroke-width="1"/></svg>
<span class="t" style="left:1601.50px;top:387px;font-size:15px;color:#464a54;">-</span>
<span class="t" style="left:1683.25px;top:387px;font-size:15px;color:#464a54;">1</span>
<div style="left:1747.8px;top:387.275px;width:16.4px;height:16.6px;background:#fff;border:1px solid #bcbcc1;border-radius:3.5px;"></div>
<span class="t" style="left:1861.40px;top:387px;font-size:15px;color:#464a54;letter-spacing:-0.270px;transform:scaleX(0.9015);transform-origin:0 0;">10</span>
<div style="left:1899.5px;top:380.375px;width:90.2px;height:31.6px;background:#fdfdfe;border:1px solid #e0e0e4;border-radius:6px;"></div>
<span class="t" style="left:1931.70px;top:386px;font-size:14px;color:#a9abb3;letter-spacing:-0.252px;transform:scaleX(0.8949);transform-origin:0 0;">OFF</span>
<span class="t" style="left:622.10px;top:421px;font-size:15px;color:#464a54;">7</span>
<div style="left:663px;top:416.75px;width:107.6px;height:26.5px;background:#e0e1e5;border-radius:5px;"></div>
<span class="t" style="left:679.70px;top:421px;font-size:14.5px;color:#55575c;letter-spacing:-0.065px;">Completed</span>
<span class="t" style="left:794.20px;top:421px;font-size:15px;color:#464a54;letter-spacing:1.207px;">---</span>
<span class="t" style="left:908.90px;top:421px;font-size:15px;color:#464a54;letter-spacing:-0.270px;transform:scaleX(0.8912);transform-origin:0 0;">1:7</span>
<div style="left:1015.2px;top:415.75px;width:92.6px;height:29.6px;background:#fdfdfe;border:1px solid #dcdde2;border-radius:5px;box-shadow:0 1px 1px rgba(0,0,0,.06);"></div>
<div style="left:1024px;top:421px;width:54.6px;height:21px;overflow:hidden;"><span class="t" style="left:1.2px;top:0;font-size:15px;color:#464a54;letter-spacing:0.12px;">My Method</span></div>
<svg style="left:1087.4px;top:427.34999999999997px" width="14" height="8" viewBox="0 0 14 8"><path d="M0.5 0.6 L7 7 L13.5 0.6" fill="none" stroke="#707480" stroke-width="1"/></svg>
<span class="t" style="left:1129.30px;top:421px;font-size:15px;color:#464a54;letter-spacing:-0.270px;transform:scaleX(0.9169);transform-origin:0 0;">Sample02</span>
<div style="left:1437.7px;top:415.75px;width:113.5px;height:29.6px;background:#fdfdfe;border:1px solid #dcdde2;border-radius:5px;box-shadow:0 1px 1px rgba(0,0,0,.06);"></div>
<div style="left:1440.7px;top:422.25px;width:16.2px;height:16px;background:#efb1f5;border-radius:3px;"></div>
<span class="t" style="left:1460.70px;top:421px;font-size:15px;color:#464a54;letter-spacing:-0.270px;transform:scaleX(0.9954);transform-origin:0 0;">Unkown</span>
<svg style="left:1530.9px;top:427.34999999999997px" width="14" height="8" viewBox="0 0 14 8"><path d="M0.5 0.6 L7 7 L13.5 0.6" fill="none" stroke="#707480" stroke-width="1"/></svg>
<span class="t" style="left:1601.50px;top:421px;font-size:15px;color:#464a54;">-</span>
<span class="t" style="left:1683.25px;top:421px;font-size:15px;color:#464a54;">1</span>
<div style="left:1747.8px;top:421.65px;width:16.4px;height:16.6px;background:#fff;border:1px solid #bcbcc1;border-radius:3.5px;"></div>
<span class="t" style="left:1861.40px;top:421px;font-size:15px;color:#464a54;letter-spacing:-0.270px;transform:scaleX(0.9015);transform-origin:0 0;">10</span>
<div style="left:1899.5px;top:414.75px;width:90.2px;height:31.6px;background:#fdfdfe;border:1px solid #e0e0e4;border-radius:6px;"></div>
<span class="t" style="left:1931.70px;top:420px;font-size:14px;color:#a9abb3;letter-spacing:-0.252px;transform:scaleX(0.8949);transform-origin:0 0;">OFF</span>
<span class="t" style="left:622.10px;top:455px;font-size:15px;color:#464a54;">8</span>
<div style="left:663px;top:451.125px;width:107.6px;height:26.5px;background:#2f74e0;border-radius:5px;"></div>
<span class="t" style="left:687.70px;top:455px;font-size:14.5px;color:#fff;letter-spacing:0.115px;">Running</span>
<span class="t" style="left:794.20px;top:455px;font-size:15px;color:#464a54;letter-spacing:1.207px;">---</span>
<span class="t" style="left:908.90px;top:455px;font-size:15px;color:#464a54;letter-spacing:-0.270px;transform:scaleX(0.8912);transform-origin:0 0;">1:8</span>
<div style="left:1015.2px;top:450.125px;width:92.6px;height:29.6px;background:#fdfdfe;border:1px solid #dcdde2;border-radius:5px;box-shadow:0 1px 1px rgba(0,0,0,.06);"></div>
<div style="left:1024px;top:455px;width:54.6px;height:21px;overflow:hidden;"><span class="t" style="left:1.2px;top:0;font-size:15px;color:#464a54;letter-spacing:0.12px;">My Method</span></div>
<svg style="left:1087.4px;top:461.72499999999997px" width="14" height="8" viewBox="0 0 14 8"><path d="M0.5 0.6 L7 7 L13.5 0.6" fill="none" stroke="#707480" stroke-width="1"/></svg>
<span class="t" style="left:1129.30px;top:455px;font-size:15px;color:#464a54;letter-spacing:-0.270px;transform:scaleX(0.9169);transform-origin:0 0;">Sample03</span>
<div style="left:1437.7px;top:450.125px;width:113.5px;height:29.6px;background:#fdfdfe;border:1px solid #dcdde2;border-radius:5px;box-shadow:0 1px 1px rgba(0,0,0,.06);"></div>
<div style="left:1440.7px;top:456.625px;width:16.2px;height:16px;background:#efb1f5;border-radius:3px;"></div>
<span class="t" style="left:1460.70px;top:455px;font-size:15px;color:#464a54;letter-spacing:-0.270px;transform:scaleX(0.9954);transform-origin:0 0;">Unkown</span>
<svg style="left:1530.9px;top:461.72499999999997px" width="14" height="8" viewBox="0 0 14 8"><path d="M0.5 0.6 L7 7 L13.5 0.6" fill="none" stroke="#707480" stroke-width="1"/></svg>
<span class="t" style="left:1601.50px;top:455px;font-size:15px;color:#464a54;">-</span>
<span class="t" style="left:1683.25px;top:455px;font-size:15px;color:#464a54;">1</span>
<div style="left:1747.8px;top:456.025px;width:16.4px;height:16.6px;background:#fff;border:1px solid #bcbcc1;border-radius:3.5px;"></div>
<span class="t" style="left:1861.40px;top:455px;font-size:15px;color:#464a54;letter-spacing:-0.270px;transform:scaleX(0.9015);transform-origin:0 0;">10</span>
<div style="left:1899.5px;top:449.125px;width:90.2px;height:31.6px;background:#fdfdfe;border:1px solid #e0e0e4;border-radius:6px;"></div>
<span class="t" style="left:1931.70px;top:455px;font-size:14px;color:#a9abb3;letter-spacing:-0.252px;transform:scaleX(0.8949);transform-origin:0 0;">OFF</span>
<span class="t" style="left:622.10px;top:490px;font-size:15px;color:#464a54;">9</span>
<div style="left:663px;top:485.5px;width:107.6px;height:26.5px;background:#d2f5e3;border-radius:5px;"></div>
<span class="t" style="left:696.20px;top:489px;font-size:14.5px;color:#17a35c;letter-spacing:-0.261px;transform:scaleX(0.9690);transform-origin:0 0;">Ready</span>
<span class="t" style="left:794.20px;top:490px;font-size:15px;color:#464a54;letter-spacing:1.207px;">---</span>
<span class="t" style="left:908.90px;top:490px;font-size:15px;color:#464a54;letter-spacing:-0.270px;transform:scaleX(0.8912);transform-origin:0 0;">1:9</span>
<div style="left:1015.2px;top:484.5px;width:92.6px;height:29.6px;background:#fdfdfe;border:1px solid #dcdde2;border-radius:5px;box-shadow:0 1px 1px rgba(0,0,0,.06);"></div>
<div style="left:1024px;top:490px;width:54.6px;height:21px;overflow:hidden;"><span class="t" style="left:1.2px;top:0;font-size:15px;color:#464a54;letter-spacing:0.12px;">My Method</span></div>
<svg style="left:1087.4px;top:496.09999999999997px" width="14" height="8" viewBox="0 0 14 8"><path d="M0.5 0.6 L7 7 L13.5 0.6" fill="none" stroke="#707480" stroke-width="1"/></svg>
<span class="t" style="left:1129.30px;top:490px;font-size:15px;color:#464a54;letter-spacing:-0.270px;transform:scaleX(0.9169);transform-origin:0 0;">Sample04</span>
<div style="left:1437.7px;top:484.5px;width:113.5px;height:29.6px;background:#fdfdfe;border:1px solid #dcdde2;border-radius:5px;box-shadow:0 1px 1px rgba(0,0,0,.06);"></div>
<div style="left:1440.7px;top:491.0px;width:16.2px;height:16px;background:#efb1f5;border-radius:3px;"></div>
<span class="t" style="left:1460.70px;top:490px;font-size:15px;color:#464a54;letter-spacing:-0.270px;transform:scaleX(0.9954);transform-origin:0 0;">Unkown</span>
<svg style="left:1530.9px;top:496.09999999999997px" width="14" height="8" viewBox="0 0 14 8"><path d="M0.5 0.6 L7 7 L13.5 0.6" fill="none" stroke="#707480" stroke-width="1"/></svg>
<span class="t" style="left:1601.50px;top:490px;font-size:15px;color:#464a54;">-</span>
<span class="t" style="left:1683.25px;top:490px;font-size:15px;color:#464a54;">1</span>
<div style="left:1747.8px;top:490.4px;width:16.4px;height:16.6px;background:#fff;border:1px solid #bcbcc1;border-radius:3.5px;"></div>
<span class="t" style="left:1861.40px;top:490px;font-size:15px;color:#464a54;letter-spacing:-0.270px;transform:scaleX(0.9015);transform-origin:0 0;">10</span>
<div style="left:1899.5px;top:483.5px;width:90.2px;height:31.6px;background:#fdfdfe;border:1px solid #e0e0e4;border-radius:6px;"></div>
<span class="t" style="left:1931.70px;top:489px;font-size:14px;color:#222;letter-spacing:-0.252px;transform:scaleX(0.8949);transform-origin:0 0;">OFF</span>
<svg style="left:581.5px;top:457px" width="17" height="20" viewBox="0 0 17 20"><path d="M0.2 0.3 L16.6 9.8 L0.2 19.3 Z" fill="#2f74e0"/></svg>
<div style="left:0px;top:1082.5px;width:2000px;height:16px;background:#ffffff;"></div>
<span class="t" style="left:29.70px;top:692px;font-size:17px;color:#1a1a1a;font-weight:700;letter-spacing:-0.306px;transform:scaleX(0.9748);transform-origin:0 0;">Direct Control</span>
<div class="btn" style="left:928.6px;top:680.6px;width:158.6px;height:32.4px;"></div>
<svg style="left:939px;top:684.7px" width="24" height="24" viewBox="-12 -12 24 24">
<g fill="#e9b93f"><rect x="-2.2" y="-11" width="4.4" height="5" rx="1" transform="rotate(0)"/><rect x="-2.2" y="-11" width="4.4" height="5" rx="1" transform="rotate(36)"/><rect x="-2.2" y="-11" width="4.4" height="5" rx="1" transform="rotate(72)"/><rect x="-2.2" y="-11" width="4.4" height="5" rx="1" transform="rotate(108)"/><rect x="-2.2" y="-11" width="4.4" height="5" rx="1" transform="rotate(144)"/><rect x="-2.2" y="-11" width="4.4" height="5" rx="1" transform="rotate(180)"/><rect x="-2.2" y="-11" width="4.4" height="5" rx="1" transform="rotate(216)"/><rect x="-2.2" y="-11" width="4.4" height="5" rx="1" transform="rotate(252)"/><rect x="-2.2" y="-11" width="4.4" height="5" rx="1" transform="rotate(288)"/><rect x="-2.2" y="-11" width="4.4" height="5" rx="1" transform="rotate(324)"/><circle r="8.6"/></g>
<circle r="4.2" fill="none" stroke="#b98a1e" stroke-width="1.3"/><circle r="1.4" fill="#b98a1e"/></svg>
<span class="t" style="left:970.30px;top:687px;font-size:15px;color:#5d6373;letter-spacing:-0.270px;transform:scaleX(0.9681);transform-origin:0 0;">Display Settings</span>
<div style="left:16.8px;top:726px;width:267px;height:339px;background:#f4f5f7;"></div>
<div style="left:287.8px;top:726px;width:267px;height:339px;background:#f4f5f7;"></div>
<div style="left:558.8px;top:726px;width:267px;height:339px;background:#f4f5f7;"></div>
<div style="left:829.8px;top:726px;width:266px;height:339px;background:#f4f5f7;"></div>
<span class="t" style="left:123.60px;top:739px;font-size:18.7px;color:#111;font-weight:700;letter-spacing:-0.337px;transform:scaleX(0.9757);transform-origin:0 0;">Pump</span>
<span class="t" style="left:364.20px;top:739px;font-size:18.7px;color:#111;font-weight:700;letter-spacing:-0.337px;transform:scaleX(0.9933);transform-origin:0 0;">Autosampler</span>
<span class="t" style="left:631.80px;top:739px;font-size:18.7px;color:#111;font-weight:700;letter-spacing:-0.337px;transform:scaleX(0.9916);transform-origin:0 0;">Column Oven</span>
<span class="t" style="left:923.60px;top:739px;font-size:18.7px;color:#111;font-weight:700;letter-spacing:-0.151px;">Detector</span>
<svg style="left:202px;top:786.2px" width="161.5" height="8.2" viewBox="0 0 161.5 8.2"><rect width="161.5" height="8.2" fill="#8ec6f3"/><path d="M6.0 8.2 L16.2 0 L54.6 0 L44.4 8.2 Z" fill="#6bafdf"/><path d="M82.3 8.2 L92.5 0 L130.9 0 L120.7 8.2 Z" fill="#6bafdf"/><path d="M158.6 8.2 L168.8 0 L207.2 0 L197.0 8.2 Z" fill="#6bafdf"/></svg>
<svg style="left:466.6px;top:786.2px" width="161.4" height="8.2" viewBox="0 0 161.4 8.2"><rect width="161.4" height="8.2" fill="#8ec6f3"/><path d="M6.0 8.2 L16.2 0 L54.6 0 L44.4 8.2 Z" fill="#6bafdf"/><path d="M82.3 8.2 L92.5 0 L130.9 0 L120.7 8.2 Z" fill="#6bafdf"/><path d="M158.6 8.2 L168.8 0 L207.2 0 L197.0 8.2 Z" fill="#6bafdf"/></svg>
<svg style="left:738.2px;top:786.2px" width="161.8" height="8.2" viewBox="0 0 161.8 8.2"><rect width="161.8" height="8.2" fill="#8ec6f3"/><path d="M6.0 8.2 L16.2 0 L54.6 0 L44.4 8.2 Z" fill="#6bafdf"/><path d="M82.3 8.2 L92.5 0 L130.9 0 L120.7 8.2 Z" fill="#6bafdf"/><path d="M158.6 8.2 L168.8 0 L207.2 0 L197.0 8.2 Z" fill="#6bafdf"/></svg>
<svg style="left:120px;top:778px" width="60" height="37" viewBox="120 778 60 37">
<rect x="121" y="787.6" width="6" height="18.2" fill="#9a9db5"/>
<rect x="126.2" y="778.9" width="9.1" height="35" rx="1" fill="#aeb1c1"/>
<rect x="140.8" y="778.9" width="38" height="35" rx="2" fill="#aeb1c1"/>
<rect x="141.3" y="782" width="34.7" height="28.8" fill="#525b76"/>
<rect x="135.3" y="787.6" width="35.7" height="18.2" fill="#8f93ae"/>
</svg>
<svg style="left:390px;top:768px" width="62" height="58" viewBox="390 768 62 58">
<rect x="391.7" y="770.6" width="58.1" height="4.1" fill="#a9abbc"/>
<rect x="429.1" y="769.5" width="12.7" height="7.3" rx="0.8" fill="#6b7190"/>
<path d="M433.3 776.8 H437.6 V788.2 L433.3 786 Z" fill="#6b7190"/>
<path d="M423.2 796 L431.6 790.4 H438.6 L448 796 V824.7 H423.2 Z" fill="#a9abbc"/>
<rect x="423.2" y="803.7" width="24.8" height="2.2" fill="#8e91a8"/>
<rect x="394.9" y="793.6" width="23.8" height="4.2" fill="#8792aa"/>
<rect x="394.9" y="793.6" width="9.4" height="4.2" fill="#4f8a9a"/>
<path d="M396 798.5 H404 V824.7 H393.1 V803 Z" fill="#7fe0e0"/>
<path d="M405 798.5 H417 Q419.3 799 419.3 802 V823.7 H402 V802 Z" fill="#c9f9f9"/>
<rect x="394.9" y="809" width="7.1" height="13.3" fill="#14a9b0"/>
<rect x="404.1" y="809" width="14.7" height="13.3" fill="#19c4c6"/>
</svg>
<svg style="left:662.4px;top:788px" width="58.6" height="16.8" viewBox="0 0 58.6 16.8">
<rect x="8" y="2.6" width="42" height="11.8" fill="#e8a31c"/>
<rect x="0" y="0" width="9.6" height="16.8" rx="1.5" fill="#f5c426"/>
<rect x="49" y="0" width="9.6" height="16.8" rx="1.5" fill="#f5c426"/>
</svg>
<div style="left:933.4px;top:767.6px;width:58.2px;height:58px;background:#d1e7fc;"></div>
<svg style="left:933.4px;top:767.6px" width="58.2" height="58" viewBox="0 0 58.2 58">
<path d="M4.6 43.6 H17.6 L24.7 29.2 L29 40.2 L36.3 17.5 L44.6 43.6 H52" fill="none" stroke="#2f8bf3" stroke-width="3.8" stroke-linejoin="round"/>
</svg>
<div style="left:66.8px;top:834.4px;width:166.2px;height:33px;background:#fff;border:1px solid #e0e1e6;border-radius:5px;box-shadow:0 1px 2px rgba(0,0,0,.10);"></div>
<div style="left:66.8px;top:834.4px;width:83.1px;height:33px;background:#f1f6fe;border:1.5px solid #5b95e8;border-radius:5px 0 0 5px;"></div>
<span class="t" style="left:95.20px;top:842px;font-size:15px;color:#3f83e6;letter-spacing:-0.270px;transform:scaleX(0.8692);transform-origin:0 0;-webkit-text-stroke:0.35px currentColor;">OFF</span>
<span class="t" style="left:180.40px;top:842px;font-size:15px;color:#555;letter-spacing:-0.270px;transform:scaleX(0.9717);transform-origin:0 0;">ON</span>
<div style="left:590px;top:834.4px;width:99.4px;height:33px;background:#fff;border:1px solid #e0e1e6;border-radius:5px;box-shadow:0 1px 2px rgba(0,0,0,.10);"></div>
<div style="left:639.7px;top:834.4px;width:49.7px;height:33px;background:#f1f6fe;border:1.5px solid #5b95e8;border-radius:0 5px 5px 0;"></div>
<span class="t" style="left:601.10px;top:842px;font-size:15px;color:#555;letter-spacing:-0.270px;transform:scaleX(0.8726);transform-origin:0 0;">OFF</span>
<span class="t" style="left:653.60px;top:842px;font-size:15px;color:#3f83e6;letter-spacing:-0.270px;transform:scaleX(0.9942);transform-origin:0 0;-webkit-text-stroke:0.35px currentColor;">ON</span>
<div style="left:715.6px;top:834.4px;width:99.4px;height:33px;background:#fff;border:1px solid #e0e1e6;border-radius:5px;box-shadow:0 1px 2px rgba(0,0,0,.10);"></div>
<div style="left:715.6px;top:834.4px;width:49.7px;height:33px;background:#f1f6fe;border:1.5px solid #5b95e8;border-radius:5px 0 0 5px;"></div>
<span class="t" style="left:727.80px;top:842px;font-size:15px;color:#3f83e6;letter-spacing:-0.270px;transform:scaleX(0.8692);transform-origin:0 0;-webkit-text-stroke:0.35px currentColor;">OFF</span>
<span class="t" style="left:779.50px;top:842px;font-size:15px;color:#555;letter-spacing:-0.270px;transform:scaleX(0.9627);transform-origin:0 0;">ON</span>
<div class="btn" style="left:325.5px;top:834.6px;width:91px;height:32.8px;"></div>
<span class="t" style="left:349.50px;top:843px;font-size:16px;color:#555;letter-spacing:-0.099px;">Purge</span>
<div class="btn" style="left:425.7px;top:834.6px;width:91px;height:32.8px;"></div>
<span class="t" style="left:451.90px;top:843px;font-size:16px;color:#555;letter-spacing:-0.288px;transform:scaleX(0.9786);transform-origin:0 0;">Rinse</span>
<div class="btn" style="left:846.5px;top:834.6px;width:113.5px;height:32.8px;"></div>
<span class="t" style="left:868.10px;top:843px;font-size:16px;color:#555;letter-spacing:-0.187px;">CDD Zero</span>
<div class="btn" style="left:965.7px;top:834.6px;width:113px;height:32.8px;"></div>
<span class="t" style="left:992.30px;top:843px;font-size:16px;color:#555;letter-spacing:-0.128px;">UV Zero</span>
<div style="left:25px;top:876px;width:250px;height:1px;background:#e3e4e8;"></div>
<div style="left:296px;top:876px;width:250px;height:1px;background:#e3e4e8;"></div>
<div style="left:567px;top:876px;width:250px;height:1px;background:#e3e4e8;"></div>
<div style="left:838px;top:876px;width:250px;height:1px;background:#e3e4e8;"></div>
<span class="t" style="left:26.10px;top:893px;font-size:12.3px;color:#222;letter-spacing:0.010px;">A Flow</span>
<span class="t" style="left:128.70px;top:893px;font-size:12.5px;color:#222;">:</span>
<span class="t" style="left:153.30px;top:893px;font-size:14px;color:#111;letter-spacing:-0.230px;-webkit-text-stroke:0.2px #111;">0.8</span>
<span class="t" style="left:181.40px;top:893px;font-size:12.3px;color:#222;letter-spacing:0.380px;">mL/mi</span>
<svg style="left:226px;top:897px" width="11" height="11" viewBox="0 0 11 11"><path d="M0.3 10.7 L1 7 L6.4 1.6 L9.4 4.6 L4 10 Z" fill="#9a9da9"/><path d="M7 1 L7.9 0.1 L10.9 3.1 L10 4 Z" fill="#9a9da9"/></svg>
<div style="left:24px;top:916px;width:232px;height:1px;background:#e4e4e8;"></div>
<div style="left:24px;top:917px;width:232px;height:1px;background:#d3d4d9;"></div>
<div style="left:24px;top:918px;width:232px;height:1px;background:#f1f2f4;"></div>
<span class="t" style="left:26.10px;top:930px;font-size:12.3px;color:#222;letter-spacing:-0.221px;transform:scaleX(0.9858);transform-origin:0 0;">B Flow</span>
<span class="t" style="left:128.70px;top:930px;font-size:12.5px;color:#222;">:</span>
<span class="t" style="left:156.90px;top:930px;font-size:14px;color:#111;letter-spacing:-0.252px;transform:scaleX(0.8441);transform-origin:0 0;-webkit-text-stroke:0.2px #111;">1.0</span>
<span class="t" style="left:181.40px;top:930px;font-size:12.3px;color:#222;letter-spacing:0.380px;">mL/mi</span>
<svg style="left:226px;top:935px" width="11" height="11" viewBox="0 0 11 11"><path d="M0.3 10.7 L1 7 L6.4 1.6 L9.4 4.6 L4 10 Z" fill="#9a9da9"/><path d="M7 1 L7.9 0.1 L10.9 3.1 L10 4 Z" fill="#9a9da9"/></svg>
<div style="left:24px;top:954px;width:232px;height:1px;background:#d6d7dc;"></div>
<div style="left:24px;top:955px;width:232px;height:1px;background:#dddee2;"></div>
<span class="t" style="left:26.10px;top:968px;font-size:12.3px;color:#222;letter-spacing:-0.221px;transform:scaleX(0.9885);transform-origin:0 0;">A Pressure</span>
<span class="t" style="left:128.70px;top:968px;font-size:12.5px;color:#222;">:</span>
<span class="t" style="left:147.30px;top:968px;font-size:14px;color:#111;letter-spacing:-0.252px;transform:scaleX(0.9436);transform-origin:0 0;-webkit-text-stroke:0.2px #111;">10.4</span>
<span class="t" style="left:181.40px;top:968px;font-size:12.3px;color:#222;letter-spacing:-0.221px;transform:scaleX(0.9818);transform-origin:0 0;">MPa</span>
<div style="left:24px;top:991px;width:232px;height:1px;background:#e7e8eb;"></div>
<div style="left:24px;top:992px;width:232px;height:1px;background:#d3d4d9;"></div>
<div style="left:24px;top:993px;width:232px;height:1px;background:#edeef1;"></div>
<span class="t" style="left:26.10px;top:1005px;font-size:12.3px;color:#222;letter-spacing:-0.221px;transform:scaleX(0.9601);transform-origin:0 0;">B Pressure</span>
<span class="t" style="left:128.70px;top:1005px;font-size:12.5px;color:#222;">:</span>
<span class="t" style="left:153.30px;top:1005px;font-size:14px;color:#111;letter-spacing:-0.252px;transform:scaleX(0.9865);transform-origin:0 0;-webkit-text-stroke:0.2px #111;">3.9</span>
<span class="t" style="left:181.40px;top:1005px;font-size:12.3px;color:#222;letter-spacing:-0.221px;transform:scaleX(0.9818);transform-origin:0 0;">MPa</span>
<div style="left:24px;top:1028px;width:232px;height:1px;background:#edeef1;"></div>
<div style="left:24px;top:1029px;width:232px;height:1px;background:#d3d4d9;"></div>
<div style="left:24px;top:1030px;width:232px;height:1px;background:#e7e8eb;"></div>
<span class="t" style="left:297.00px;top:893px;font-size:12.3px;color:#222;letter-spacing:0.015px;">Vial Number</span>
<span class="t" style="left:386.00px;top:893px;font-size:12.5px;color:#222;">:</span>
<span class="t" style="left:405.90px;top:893px;font-size:14px;color:#111;letter-spacing:-0.150px;-webkit-text-stroke:0.2px #111;">1:15</span>
<div style="left:295px;top:916px;width:232px;height:1px;background:#e4e4e8;"></div>
<div style="left:295px;top:917px;width:232px;height:1px;background:#d3d4d9;"></div>
<div style="left:295px;top:918px;width:232px;height:1px;background:#f1f2f4;"></div>
<span class="t" style="left:297.20px;top:930px;font-size:12.3px;color:#222;letter-spacing:-0.068px;">Inj. Vol.</span>
<span class="t" style="left:386.00px;top:930px;font-size:12.5px;color:#222;">:</span>
<span class="t" style="left:405.70px;top:930px;font-size:14px;color:#111;letter-spacing:-0.252px;transform:scaleX(0.9473);transform-origin:0 0;-webkit-text-stroke:0.2px #111;">10.0</span>
<span class="t" style="left:438.80px;top:930px;font-size:12.3px;color:#222;letter-spacing:-0.221px;transform:scaleX(0.8839);transform-origin:0 0;">uL</span>
<div style="left:295px;top:954px;width:232px;height:1px;background:#d6d7dc;"></div>
<div style="left:295px;top:955px;width:232px;height:1px;background:#dddee2;"></div>
<span class="t" style="left:567.60px;top:893px;font-size:12.3px;color:#222;letter-spacing:0.060px;">A Temp</span>
<span class="t" style="left:643.00px;top:893px;font-size:12.5px;color:#222;">:</span>
<span class="t" style="left:659.20px;top:893px;font-size:14px;color:#111;letter-spacing:0.150px;-webkit-text-stroke:0.2px #111;">49.9</span>
<span class="t" style="left:693.90px;top:893px;font-size:14px;color:#333;">/</span>
<span class="t" style="left:705.30px;top:893px;font-size:14px;color:#111;letter-spacing:0.425px;-webkit-text-stroke:0.2px #111;">50</span>
<span class="t" style="left:747.40px;top:893px;font-size:12.3px;color:#222;letter-spacing:-0.221px;transform:scaleX(0.9279);transform-origin:0 0;">°C</span>
<svg style="left:768px;top:897px" width="11" height="11" viewBox="0 0 11 11"><path d="M0.3 10.7 L1 7 L6.4 1.6 L9.4 4.6 L4 10 Z" fill="#9a9da9"/><path d="M7 1 L7.9 0.1 L10.9 3.1 L10 4 Z" fill="#9a9da9"/></svg>
<div style="left:566px;top:916px;width:232px;height:1px;background:#e4e4e8;"></div>
<div style="left:566px;top:917px;width:232px;height:1px;background:#d3d4d9;"></div>
<div style="left:566px;top:918px;width:232px;height:1px;background:#f1f2f4;"></div>
<span class="t" style="left:567.90px;top:930px;font-size:12.3px;color:#222;letter-spacing:-0.221px;transform:scaleX(0.9884);transform-origin:0 0;">B Temp</span>
<span class="t" style="left:643.00px;top:930px;font-size:12.5px;color:#222;">:</span>
<span class="t" style="left:659.20px;top:930px;font-size:14px;color:#111;letter-spacing:0.150px;-webkit-text-stroke:0.2px #111;">39.9</span>
<span class="t" style="left:693.90px;top:930px;font-size:14px;color:#333;">/</span>
<span class="t" style="left:705.30px;top:930px;font-size:14px;color:#111;letter-spacing:0.425px;-webkit-text-stroke:0.2px #111;">40</span>
<span class="t" style="left:747.40px;top:930px;font-size:12.3px;color:#222;letter-spacing:-0.221px;transform:scaleX(0.9279);transform-origin:0 0;">°C</span>
<svg style="left:768px;top:935px" width="11" height="11" viewBox="0 0 11 11"><path d="M0.3 10.7 L1 7 L6.4 1.6 L9.4 4.6 L4 10 Z" fill="#9a9da9"/><path d="M7 1 L7.9 0.1 L10.9 3.1 L10 4 Z" fill="#9a9da9"/></svg>
<div style="left:566px;top:954px;width:232px;height:1px;background:#d6d7dc;"></div>
<div style="left:566px;top:955px;width:232px;height:1px;background:#dddee2;"></div>
<span class="t" style="left:567.90px;top:968px;font-size:12.3px;color:#222;letter-spacing:-0.185px;">Room Temp</span>
<span class="t" style="left:643.00px;top:968px;font-size:12.5px;color:#222;">:</span>
<span class="t" style="left:659.40px;top:968px;font-size:14px;color:#111;letter-spacing:0.083px;-webkit-text-stroke:0.2px #111;">25.2</span>
<span class="t" style="left:695.60px;top:968px;font-size:12.3px;color:#222;letter-spacing:-0.221px;transform:scaleX(0.9279);transform-origin:0 0;">°C</span>
<div style="left:566px;top:991px;width:232px;height:1px;background:#e7e8eb;"></div>
<div style="left:566px;top:992px;width:232px;height:1px;background:#d3d4d9;"></div>
<div style="left:566px;top:993px;width:232px;height:1px;background:#edeef1;"></div>
<span class="t" style="left:839.60px;top:884px;font-size:12.8px;color:#222;font-weight:700;letter-spacing:-0.230px;transform:scaleX(0.9583);transform-origin:0 0;">UV Detector</span>
<span class="t" style="left:838.60px;top:917px;font-size:12.3px;color:#222;letter-spacing:0.056px;">Wavelength</span>
<span class="t" style="left:939.00px;top:917px;font-size:12.5px;color:#222;">:</span>
<span class="t" style="left:959.70px;top:917px;font-size:14px;color:#111;letter-spacing:0.620px;-webkit-text-stroke:0.2px #111;">254</span>
<span class="t" style="left:991.70px;top:917px;font-size:12.3px;color:#222;letter-spacing:-0.221px;transform:scaleX(0.8616);transform-origin:0 0;">°C</span>
<div style="left:837px;top:940px;width:232px;height:1px;background:#e7e8eb;"></div>
<div style="left:837px;top:941px;width:232px;height:1px;background:#d3d4d9;"></div>
<div style="left:837px;top:942px;width:232px;height:1px;background:#edeef1;"></div>
<span class="t" style="left:838.60px;top:954px;font-size:12.3px;color:#222;letter-spacing:-0.221px;">Cell Temp</span>
<span class="t" style="left:939.00px;top:954px;font-size:12.5px;color:#222;">:</span>
<span class="t" style="left:955.30px;top:954px;font-size:14px;color:#111;letter-spacing:-0.217px;-webkit-text-stroke:0.2px #111;">49.7</span>
<span class="t" style="left:989.30px;top:954px;font-size:14px;color:#333;">/</span>
<span class="t" style="left:1001.40px;top:954px;font-size:14px;color:#111;letter-spacing:0.425px;-webkit-text-stroke:0.2px #111;">50</span>
<span class="t" style="left:1043.40px;top:954px;font-size:12.3px;color:#222;letter-spacing:-0.221px;transform:scaleX(0.9205);transform-origin:0 0;">°C</span>
<div style="left:837px;top:977px;width:232px;height:1px;background:#f1f2f4;"></div>
<div style="left:837px;top:978px;width:232px;height:1px;background:#d3d4d9;"></div>
<div style="left:837px;top:979px;width:232px;height:1px;background:#e4e4e8;"></div>
<span class="t" style="left:839.60px;top:983px;font-size:12.8px;color:#222;font-weight:700;letter-spacing:-0.230px;transform:scaleX(0.9618);transform-origin:0 0;">CDD Detector</span>
<span class="t" style="left:838.60px;top:1016px;font-size:12.3px;color:#222;letter-spacing:-0.221px;transform:scaleX(0.9813);transform-origin:0 0;">Cell TempCh1</span>
<span class="t" style="left:939.00px;top:1016px;font-size:12.5px;color:#222;">:</span>
<span class="t" style="left:956.30px;top:1016px;font-size:14px;color:#111;letter-spacing:-0.175px;-webkit-text-stroke:0.2px #111;">53</span>
<span class="t" style="left:989.30px;top:1016px;font-size:14px;color:#333;">/</span>
<span class="t" style="left:1001.40px;top:1016px;font-size:14px;color:#111;letter-spacing:0.425px;-webkit-text-stroke:0.2px #111;">53</span>
<span class="t" style="left:1043.40px;top:1016px;font-size:12.3px;color:#222;letter-spacing:-0.221px;transform:scaleX(0.9205);transform-origin:0 0;">°C</span>
<div style="left:837px;top:1039px;width:232px;height:1px;background:#edeef1;"></div>
<div style="left:837px;top:1040px;width:232px;height:1px;background:#d3d4d9;"></div>
<div style="left:837px;top:1041px;width:232px;height:1px;background:#e7e8eb;"></div>
<div style="left:1075px;top:886px;width:15.6px;height:163.6px;background:#f0f0f1;"></div>
<div style="left:1075px;top:903px;width:15.6px;height:78px;background:#c2c2c4;"></div>
<svg style="left:1078px;top:890px" width="10" height="8" viewBox="0 0 10 8"><path d="M1 6.5 L5 2.3 L9 6.5" fill="none" stroke="#555" stroke-width="1.7"/></svg>
<svg style="left:1078px;top:1037px" width="10" height="8" viewBox="0 0 10 8"><path d="M1 1.5 L5 5.7 L9 1.5" fill="none" stroke="#555" stroke-width="1.7"/></svg>
<span class="t" style="left:1123.00px;top:688px;font-size:16.3px;color:#1a1a1a;font-weight:700;letter-spacing:-0.293px;transform:scaleX(0.9559);transform-origin:0 0;">Analysis Result Chart :</span>
<span class="t" style="left:1304.40px;top:688px;font-size:16px;color:#1a1a1a;font-weight:700;letter-spacing:-0.288px;transform:scaleX(0.9143);transform-origin:0 0;">Testing02</span>
<span class="t" style="left:1827.00px;top:690px;font-size:14.5px;color:#333;letter-spacing:-0.261px;">Graph:</span>
<div style="left:1881.6px;top:685.6px;width:98px;height:32.8px;background:#fff;border:1px solid #e0e1e6;border-radius:5px;box-shadow:0 1px 2px rgba(0,0,0,.10);"></div>
<div style="left:1881.6px;top:685.6px;width:49.2px;height:32.8px;background:#f1f6fe;border:1.5px solid #5b95e8;border-radius:5px 0 0 5px;"></div>
<svg style="left:1896px;top:693px" width="22" height="18" viewBox="0 0 22 18"><rect x="0.5" y="0.5" width="20" height="16" fill="#e4e6ee" stroke="#9aa0b4"/>
<path d="M4.5 1 V16 M8.5 1 V16 M12.5 1 V16 M16.5 1 V16 M1 4.5 H20 M1 8.5 H20 M1 12.5 H20" stroke="#c3c7d6" stroke-width="0.8"/></svg>
<svg style="left:1944px;top:693px" width="22" height="18" viewBox="0 0 22 18"><rect x="0.5" y="0.5" width="20" height="7" fill="#e4e6ee" stroke="#9aa0b4"/><rect x="0.5" y="10.5" width="20" height="7" fill="#e4e6ee" stroke="#9aa0b4"/>
<path d="M4.5 1 V7 M8.5 1 V7 M12.5 1 V7 M16.5 1 V7 M1 4 H20 M4.5 11 V17 M8.5 11 V17 M12.5 11 V17 M16.5 11 V17 M1 14 H20" stroke="#c3c7d6" stroke-width="0.8"/></svg>
<div style="left:1113.6px;top:727px;width:162.4px;height:338px;background:#f4f5f7;"></div>
<div style="left:1294.8px;top:729px;width:691px;height:336px;background:#eeeff3;"></div>
<span class="t" style="left:1121.00px;top:744px;font-size:14.5px;color:#333;letter-spacing:-0.261px;transform:scaleX(0.9619);transform-origin:0 0;">Y Axis :</span>
<div style="left:1144.3px;top:774.4px;width:19.8px;height:19.8px;border-radius:50%;background:#2f74e0;"></div>
<div style="left:1149.9px;top:780px;width:8.6px;height:8.6px;border-radius:50%;background:#fff;"></div>
<span class="t" style="left:1172.10px;top:775px;font-size:15px;color:#666;letter-spacing:-0.270px;transform:scaleX(0.9230);transform-origin:0 0;">Area</span>
<div style="left:1144.3px;top:801.4px;width:19.8px;height:19.8px;border-radius:50%;background:#fff;border:1.3px solid #c4c4c8;"></div>
<span class="t" style="left:1172.50px;top:802px;font-size:15px;color:#666;letter-spacing:-0.270px;transform:scaleX(0.9927);transform-origin:0 0;">Height</span>
<span class="t" style="left:1121.60px;top:828px;font-size:14.5px;color:#333;letter-spacing:-0.261px;transform:scaleX(0.9868);transform-origin:0 0;">Threshold :</span>
<svg style="left:1132px;top:869.5px" width="34" height="4" viewBox="0 0 34 4"><path d="M0 2 H32" stroke="#e0353b" stroke-width="1.9" stroke-dasharray="2.2 1.8" fill="none"/></svg>
<span class="t" style="left:1174.10px;top:861px;font-size:14px;color:#e0353b;letter-spacing:-0.252px;transform:scaleX(0.9499);transform-origin:0 0;">Over</span>
<span class="t" style="left:1121.00px;top:891px;font-size:14.5px;color:#333;letter-spacing:-0.261px;transform:scaleX(0.9699);transform-origin:0 0;">Sample Type :</span>
<svg style="left:1132px;top:925.5px" width="44" height="20" viewBox="0 0 44 20"><path d="M0 10 H42" stroke="#333" stroke-width="1.1"/><rect x="16" y="4.5" width="11" height="11" fill="#7fdcd4" stroke="#222" stroke-width="1.1"/></svg>
<span class="t" style="left:1181.20px;top:925px;font-size:14.5px;color:#333;letter-spacing:-0.261px;transform:scaleX(0.9382);transform-origin:0 0;">Standard</span>
<svg style="left:1132px;top:958.9px" width="44" height="20" viewBox="0 0 44 20"><path d="M0 10 H42" stroke="#333" stroke-width="1.1"/><path d="M14.5 10 L21.5 3 L28.5 10 L21.5 17 Z" fill="#e8b3f6" stroke="#333" stroke-width="1.1"/></svg>
<span class="t" style="left:1181.20px;top:959px;font-size:14.5px;color:#333;letter-spacing:-0.261px;transform:scaleX(0.9416);transform-origin:0 0;">Unkown</span>
<svg style="left:1132px;top:992.3px" width="44" height="20" viewBox="0 0 44 20"><path d="M0 10 H42" stroke="#333" stroke-width="1.1"/><path d="M15 14.5 L21.5 3 L28 14.5 Z" fill="#f6f032" stroke="#222" stroke-width="1.1"/></svg>
<span class="t" style="left:1181.20px;top:992px;font-size:14.5px;color:#333;letter-spacing:-0.261px;transform:scaleX(0.9895);transform-origin:0 0;">Control</span>
<span class="t" style="left:1302.40px;top:750px;font-size:14.5px;color:#333;letter-spacing:-0.022px;">Compound :</span>
<div style="left:1385.8px;top:748px;width:272px;height:31.8px;background:#fff;border:1px solid #e4e5e9;border-radius:4px;box-shadow:0 1px 2px rgba(0,0,0,.10);"></div>
<span class="t" style="left:1397.00px;top:754px;font-size:17px;color:#1a1a1a;">F (Det A - Ch1 - 1)</span>
<svg style="left:1634px;top:759px" width="15" height="9" viewBox="0 0 15 9"><path d="M0.7 0.7 L7.5 7.5 L14.3 0.7" fill="none" stroke="#999" stroke-width="1.1"/></svg>
<div style="left:1977px;top:791px;width:1px;height:265px;background:#f6f6f9;"></div>
<svg style="left:0;top:0" width="2000" height="1098" viewBox="0 0 2000 1098"><path d="M1379.5 805.8 V1019.2 M1408.5 805.8 V1019.2 M1437.5 805.8 V1019.2 M1466.5 805.8 V1019.2 M1496.5 805.8 V1019.2 M1525.5 805.8 V1019.2 M1554.5 805.8 V1019.2 M1583.5 805.8 V1019.2 M1613.5 805.8 V1019.2 M1642.5 805.8 V1019.2 M1671.5 805.8 V1019.2 M1700.5 805.8 V1019.2 M1730.5 805.8 V1019.2 M1759.5 805.8 V1019.2 M1788.5 805.8 V1019.2 M1817.5 805.8 V1019.2 M1847.5 805.8 V1019.2 M1876.5 805.8 V1019.2 M1905.5 805.8 V1019.2 M1934.5 805.8 V1019.2 M1349.8 965.5 H1964.2 M1349.8 912.5 H1964.2 M1349.8 859.5 H1964.2 " stroke="#a6a6ac" stroke-width="1.1" fill="none"/><path d="M1349.8 805.8 H1964.2 V1019.2" stroke="#3a3a3a" stroke-width="1.7" fill="none"/><path d="M1349.8 805.8 V1026.7 M1342.3 1019.2 H1964.2" stroke="#151515" stroke-width="1.6" fill="none"/><path d="M1379.1 1019.2 v7.5 M1408.3 1019.2 v7.5 M1437.6 1019.2 v7.5 M1466.8 1019.2 v7.5 M1496.1 1019.2 v7.5 M1525.3 1019.2 v7.5 M1554.6 1019.2 v7.5 M1583.9 1019.2 v7.5 M1613.1 1019.2 v7.5 M1642.4 1019.2 v7.5 M1671.6 1019.2 v7.5 M1700.9 1019.2 v7.5 M1730.1 1019.2 v7.5 M1759.4 1019.2 v7.5 M1788.7 1019.2 v7.5 M1817.9 1019.2 v7.5 M1847.2 1019.2 v7.5 M1876.4 1019.2 v7.5 M1905.7 1019.2 v7.5 M1934.9 1019.2 v7.5 M1964.2 1019.2 v7.5 M1342.3 965.9 h7.5 M1342.3 912.5 h7.5 M1342.3 859.1 h7.5 M1342.3 805.8 h7.5 " stroke="#151515" stroke-width="1.5" fill="none"/><path d="M1350.8 821.0 H1962.2" stroke="#c4161c" stroke-width="2" stroke-dasharray="2 2" fill="none"/><path d="M1379.1 1006.8 L1408.3 998.3 L1437.6 969.7 L1466.8 921.2 L1496.1 821.2 L1524.3 932.3 L1555.6 900.3" stroke="#0a0a0a" stroke-width="2" fill="none" stroke-linejoin="round"/><rect x="1374.0" y="1001.7" width="10.2" height="10.2" fill="#7fdcd4" stroke="#0a0a0a" stroke-width="2"/><rect x="1403.2" y="993.2" width="10.2" height="10.2" fill="#7fdcd4" stroke="#0a0a0a" stroke-width="2"/><rect x="1432.5" y="964.6" width="10.2" height="10.2" fill="#7fdcd4" stroke="#0a0a0a" stroke-width="2"/><rect x="1461.7" y="916.1" width="10.2" height="10.2" fill="#7fdcd4" stroke="#0a0a0a" stroke-width="2"/><rect x="1491.0" y="816.1" width="10.2" height="10.2" fill="#7fdcd4" stroke="#0a0a0a" stroke-width="2"/><path d="M1517.1 932.3 l7.2 -7.2 l7.2 7.2 l-7.2 7.2 Z" fill="#e8b3f6" stroke="#0a0a0a" stroke-width="1.4"/><path d="M1548.4 900.3 l7.2 -7.2 l7.2 7.2 l-7.2 7.2 Z" fill="#e8b3f6" stroke="#0a0a0a" stroke-width="1.4"/></svg>
<span class="t" style="left:1297.6px;top:1010px;font-size:12.5px;color:#444;width:40px;text-align:right;letter-spacing:-0.1px;">0</span>
<span class="t" style="left:1297.6px;top:957px;font-size:12.5px;color:#444;width:40px;text-align:right;letter-spacing:-0.1px;">250</span>
<span class="t" style="left:1297.6px;top:903px;font-size:12.5px;color:#444;width:40px;text-align:right;letter-spacing:-0.1px;">500</span>
<span class="t" style="left:1297.6px;top:850px;font-size:12.5px;color:#444;width:40px;text-align:right;letter-spacing:-0.1px;">750</span>
<span class="t" style="left:1297.6px;top:797px;font-size:12.5px;color:#444;width:40px;text-align:right;letter-spacing:-0.1px;">1000</span>
<span class="t" style="left:1329.8px;top:1031px;font-size:12.5px;color:#444;width:40px;text-align:center;letter-spacing:-0.2px;">0</span>
<span class="t" style="left:1359.0571428571427px;top:1031px;font-size:12.5px;color:#444;width:40px;text-align:center;letter-spacing:-0.2px;">1</span>
<span class="t" style="left:1388.3142857142857px;top:1031px;font-size:12.5px;color:#444;width:40px;text-align:center;letter-spacing:-0.2px;">2</span>
<span class="t" style="left:1417.5714285714284px;top:1031px;font-size:12.5px;color:#444;width:40px;text-align:center;letter-spacing:-0.2px;">3</span>
<span class="t" style="left:1446.8285714285714px;top:1031px;font-size:12.5px;color:#444;width:40px;text-align:center;letter-spacing:-0.2px;">4</span>
<span class="t" style="left:1476.0857142857142px;top:1031px;font-size:12.5px;color:#444;width:40px;text-align:center;letter-spacing:-0.2px;">5</span>
<span class="t" style="left:1505.3428571428572px;top:1031px;font-size:12.5px;color:#444;width:40px;text-align:center;letter-spacing:-0.2px;">6</span>
<span class="t" style="left:1534.6px;top:1031px;font-size:12.5px;color:#444;width:40px;text-align:center;letter-spacing:-0.2px;">7</span>
<span class="t" style="left:1563.857142857143px;top:1031px;font-size:12.5px;color:#444;width:40px;text-align:center;letter-spacing:-0.2px;">8</span>
<span class="t" style="left:1593.1142857142856px;top:1031px;font-size:12.5px;color:#444;width:40px;text-align:center;letter-spacing:-0.2px;">9</span>
<span class="t" style="left:1622.3714285714286px;top:1031px;font-size:12.5px;color:#444;width:40px;text-align:center;letter-spacing:-0.2px;">10</span>
<span class="t" style="left:1651.6285714285714px;top:1031px;font-size:12.5px;color:#444;width:40px;text-align:center;letter-spacing:-0.2px;">11</span>
<span class="t" style="left:1680.8857142857144px;top:1031px;font-size:12.5px;color:#444;width:40px;text-align:center;letter-spacing:-0.2px;">12</span>
<span class="t" style="left:1710.142857142857px;top:1031px;font-size:12.5px;color:#444;width:40px;text-align:center;letter-spacing:-0.2px;">13</span>
<span class="t" style="left:1739.4px;top:1031px;font-size:12.5px;color:#444;width:40px;text-align:center;letter-spacing:-0.2px;">14</span>
<span class="t" style="left:1768.6571428571428px;top:1031px;font-size:12.5px;color:#444;width:40px;text-align:center;letter-spacing:-0.2px;">15</span>
<span class="t" style="left:1797.9142857142856px;top:1031px;font-size:12.5px;color:#444;width:40px;text-align:center;letter-spacing:-0.2px;">16</span>
<span class="t" style="left:1827.1714285714286px;top:1031px;font-size:12.5px;color:#444;width:40px;text-align:center;letter-spacing:-0.2px;">17</span>
<span class="t" style="left:1856.4285714285716px;top:1031px;font-size:12.5px;color:#444;width:40px;text-align:center;letter-spacing:-0.2px;">18</span>
<span class="t" style="left:1885.6857142857143px;top:1031px;font-size:12.5px;color:#444;width:40px;text-align:center;letter-spacing:-0.2px;">19</span>
<span class="t" style="left:1914.942857142857px;top:1031px;font-size:12.5px;color:#444;width:40px;text-align:center;letter-spacing:-0.2px;">20</span>
<span class="t" style="left:1944.2px;top:1031px;font-size:12.5px;color:#444;width:40px;text-align:center;letter-spacing:-0.2px;">21</span>
</div>
</body>
</html>
